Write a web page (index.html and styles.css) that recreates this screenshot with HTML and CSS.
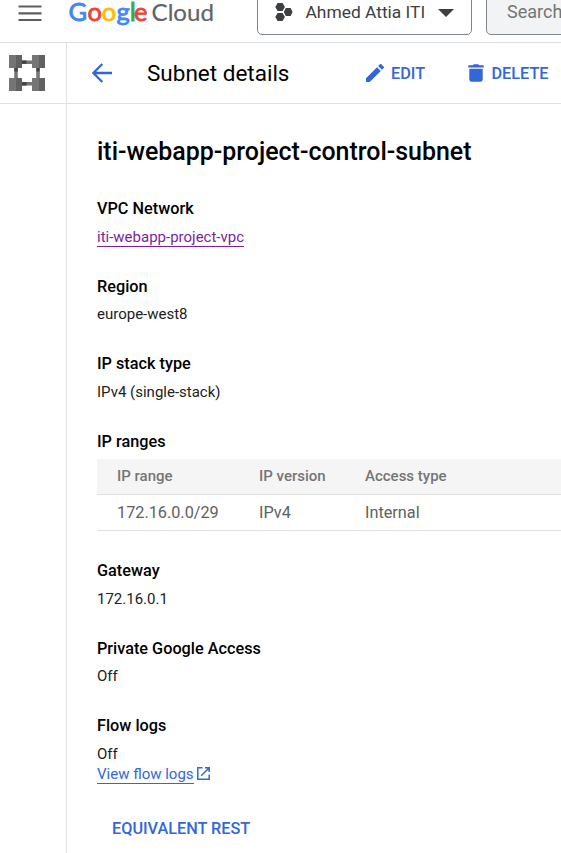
FILE: index.html
```html
<!DOCTYPE html>
<html lang="en">
<head>
<meta charset="utf-8">
<title>Subnet details</title>
<link rel="stylesheet" href="styles.css">
</head>
<body>
<header class="topbar">
  <svg class="menu" width="24" height="18" viewBox="0 0 24 18"><path d="M0.5 2.5h23M0.5 9.3h23M0.5 16h23" stroke="#5f5f5f" stroke-width="2.2"/></svg>
  <svg class="logo" width="148" height="30" viewBox="0 0 148 30">
    <text class="logo-google" y="20.6"><tspan x="0.5" class="blue">G</tspan><tspan x="19.6" class="red">o</tspan><tspan x="33.8" class="yellow">o</tspan><tspan x="48.4" class="blue">g</tspan><tspan x="61.7" class="green">l</tspan><tspan x="66" class="red">e</tspan></text>
    <text class="logo-cloud" x="83.5" y="20.6" textLength="62.5" lengthAdjust="spacingAndGlyphs">Cloud</text>
  </svg>
  <div class="project">
    <svg width="18" height="20" viewBox="0 0 18 20" fill="#3c4043"><path d="M2.6 1h5l2.3 4-2.3 4h-5L.3 5zM2.6 11h5l2.3 4-2.3 4h-5L.3 15zM10.8 6h4.8l2 4-2 4h-4.8l-2-4z"/></svg>
    <span class="project-name">Ahmed Attia ITI</span>
    <svg class="caret" width="16" height="8" viewBox="0 0 16 8"><path d="M0 0h16L8 8z" fill="#3c4043"/></svg>
  </div>
  <div class="search">Search</div>
</header>
<div class="frame">
  <aside class="rail">
    <div class="product">
      <svg width="36" height="36" viewBox="0 0 36 36">
        <path d="M12 7.2h12M12 28.8h12M7 12v12M29 12v12" stroke="#757575" stroke-width="3.6"/>
        <path d="M12.5 7.2h5M12.5 28.8h5M7 12.5v4M29 12.5v4" stroke="#424242" stroke-width="3.2"/>
        <path d="M0 0h13v13H0zM23 0h13v13H23zM0 23h13v13H0zM23 23h13v13H23z" fill="#757575"/>
        <path d="M7 0h6v13H7zM30 0h6v13h-6zM7 23h6v13H7zM30 23h6v13h-6z" fill="#616161"/>
      </svg>
    </div>
  </aside>
  <main class="main">
    <div class="actionbar">
      <svg class="back" width="20" height="20" viewBox="0 0 20 20"><path d="M20 10H1.8M10.3 1L1.4 10l8.9 9" fill="none" stroke="#3367d6" stroke-width="2.3"/></svg>
      <h1 class="page-title">Subnet details</h1>
      <button class="action edit"><svg width="18" height="18" viewBox="3 3 18 18" fill="#3367d6"><path d="M3 17.25V21h3.75L17.81 9.94l-3.75-3.75L3 17.25zM20.71 7.04a1 1 0 0 0 0-1.41l-2.34-2.34a1 1 0 0 0-1.41 0l-1.83 1.83 3.75 3.75 1.83-1.83z"/></svg><span>EDIT</span></button>
      <button class="action delete"><svg width="16" height="18" viewBox="0 0 16 18" fill="#3367d6"><path d="M.3 1.3h4.5L5.8.2h4.4l1 1.1h4.5v2.2H.3zM1.3 4.8h13.4v10.7q0 2.3-2.3 2.3H3.6q-2.3 0-2.3-2.3z"/></svg><span>DELETE</span></button>
    </div>
    <div class="content">
      <h2 class="name">iti-webapp-project-control-subnet</h2>
      <section class="field"><h3>VPC Network</h3><p><a class="link visited">iti-webapp-project-vpc</a></p></section>
      <section class="field"><h3>Region</h3><p>europe-west8</p></section>
      <section class="field"><h3>IP stack type</h3><p>IPv4 (single-stack)</p></section>
      <section class="ranges">
        <h3>IP ranges</h3>
        <div class="table">
          <div class="row head"><span>IP range</span><span>IP version</span><span>Access type</span></div>
          <div class="row"><span>172.16.0.0/29</span><span>IPv4</span><span>Internal</span></div>
        </div>
      </section>
      <section class="field"><h3>Gateway</h3><p>172.16.0.1</p></section>
      <section class="field"><h3>Private Google Access</h3><p>Off</p></section>
      <section class="field"><h3>Flow logs</h3><p>Off</p>
        <div class="logs"><a class="link">View flow logs</a><svg width="13" height="13" viewBox="0 0 13 13"><path d="M5.5.8H.8v11.4h11.4V7.5M8 .8h4.2V5M12 1L4.2 8.8" fill="none" stroke="#3367d6" stroke-width="1.5"/></svg></div>
      </section>
      <button class="rest">EQUIVALENT REST</button>
    </div>
  </main>
</div>
</body>
</html>
```
FILE: styles.css
```css
* { box-sizing: border-box; }
html, body { height: 100%; overflow: hidden; }
body {
  margin: 0;
  display: flex;
  flex-direction: column;
  background: #fff;
  color: #212121;
  font: 15px/20px Roboto, sans-serif;
}
h1, h2, h3, p { margin: 0; }
svg { flex: none; display: block; }
button { border: 0; padding: 0; background: none; font: inherit; }

.topbar {
  flex: none;
  height: 43px;
  display: flex;
  align-items: flex-start;
  overflow: hidden;
  border-bottom: 1px solid #dadce0;
}
.menu { margin: 4px 0 0 18px; }
.logo { margin-left: 26px; overflow: visible; }
.logo-google { font: 400 25.5px Lato, sans-serif; stroke-width: 0.8px; }
.logo-cloud { font: 400 23.5px Lato, sans-serif; fill: #5f6368; stroke: #5f6368; stroke-width: 0.2px; }
.blue { fill: #4285f4; stroke: #4285f4; }
.red { fill: #ea4335; stroke: #ea4335; }
.yellow { fill: #fbbc04; stroke: #fbbc04; }
.green { fill: #34a853; stroke: #34a853; }
.project, .search {
  flex: none;
  height: 47px;
  margin-top: -12px;
  display: flex;
  align-items: center;
  border: 1px solid #80868b;
  border-radius: 5px;
  font-size: 17.4px;
}
.project { width: 215px; margin-left: 41px; padding-left: 17px; color: #3c4043; }
.project-name { margin-left: 12.5px; width: 120.5px; white-space: nowrap; }
.caret { margin-left: 12px; margin-top: 3px; }
.search {
  width: 120px;
  margin-left: 14px;
  padding-left: 20px;
  background: #f1f3f4;
  color: #757575;
  font-size: 18px;
}

.frame { flex: 1; display: flex; min-height: 0; }
.rail { width: 67px; flex: none; border-right: 1px solid #e0e0e0; }
.product {
  height: 61px;
  width: 67px;
  padding: 12px 0 0 9px;
  border-bottom: 1px solid #e0e0e0;
}
.main { flex: 1; min-width: 0; }
.actionbar {
  height: 61px;
  display: flex;
  align-items: center;
  border-bottom: 1px solid #e0e0e0;
  overflow: hidden;
}
.back { margin-left: 25px; }
.page-title {
  width: 142px;
  margin-left: 35px;
  color: #000;
  font-size: 22.5px;
  font-weight: 400;
  line-height: 30px;
  white-space: nowrap;
}
.action {
  flex: none;
  display: flex;
  align-items: center;
  color: #3367d6;
  font-size: 16.25px;
  font-weight: 500;
}
.action span { padding-top: 2px; }
.edit { margin-left: 77px; width: 59px; gap: 7px; }
.delete { margin-left: 43px; gap: 7.5px; }

.content { padding: 32px 0 0 30px; }
.name {
  margin-bottom: 31.3px;
  color: #000;
  font-size: 24.95px;
  font-weight: 500;
  line-height: 32px;
}
h3 {
  color: #000;
  font-size: 16.25px;
  font-weight: 500;
  line-height: 20px;
}
.field { margin-bottom: 29.9px; }
.field p { margin-top: 7.6px; }
.link { border-bottom: 1px solid #3367d6; color: #3367d6; }
.visited { border-color: #7b1fa2; color: #7b1fa2; }

.ranges { margin-bottom: 30.4px; }
.table { margin-top: 7px; }
.row {
  display: grid;
  grid-template-columns: 142px 106px 1fr;
  align-items: center;
  height: 36px;
  padding: 1.5px 0 0 20px;
  border-bottom: 1px solid #e0e0e0;
  color: #616161;
  font-size: 16.25px;
}
.head {
  padding-top: 0;
  background: #f5f5f5;
  color: #757575;
  font-size: 15px;
  font-weight: 500;
}
.logs { display: flex; align-items: center; gap: 3px; margin-top: 1.4px; }
.logs .link { line-height: 18px; }
.logs svg { margin-bottom: 2px; }
.rest {
  display: block;
  margin: 35px 0 0 15px;
  color: #3367d6;
  font-size: 16.25px;
  font-weight: 500;
  line-height: 20px;
}
```
